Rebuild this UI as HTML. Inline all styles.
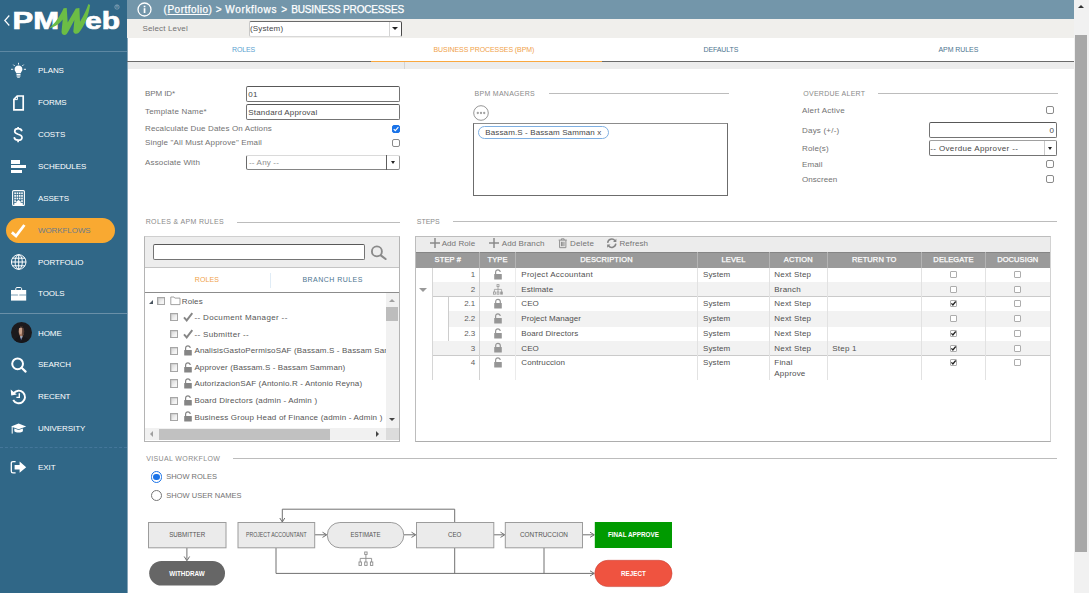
<!DOCTYPE html>
<html lang="en">
<head>
<meta charset="utf-8">
<title>PMWeb - Business Processes</title>
<style>
*{box-sizing:border-box;margin:0;padding:0}
html,body{width:1089px;height:593px;overflow:hidden;background:#fff}
body{position:relative;font-family:"Liberation Sans",sans-serif;font-size:8px;color:#555;line-height:1}
.a{position:absolute}
.t{position:absolute;white-space:nowrap;line-height:10px;height:10px;letter-spacing:.15px}
#side{left:0;top:0;width:127px;height:593px;background:#306787}
.mi{position:absolute;left:38px;color:#fff;font-size:8px;line-height:10px;letter-spacing:-.08px;white-space:nowrap}
.ic{position:absolute;overflow:visible}
.sec{position:absolute;font-size:7px;line-height:9px;color:#8a8a8a;letter-spacing:.3px;white-space:nowrap}
.hl{position:absolute;height:1px;background:#bcbcbc}
.inp{position:absolute;border:1px solid #747474;border-top-color:#585858;background:#fff;border-radius:2px}
.cb{position:absolute;width:8px;height:8px;border:1px solid #8a8a8a;border-radius:2px;background:#fff}
.tcb{position:absolute;width:8.2px;height:8.2px;border:1px solid #a6a6a6;background:linear-gradient(135deg,#d4d4d4,#f4f4f4 70%);box-shadow:inset .6px .6px 0 #c4c4c4}
.tv{color:#565656}
.tb{color:#747474}
.gh{color:#fff;font-size:7.5px;text-align:center;letter-spacing:.1px;font-weight:normal;-webkit-text-stroke:.25px #fff}
.gv{color:#505050}
.gcb{position:absolute;width:7px;height:7px;border:1px solid #adadad;background:#fff;border-radius:1px}
.hd{top:3.2px;font-size:10px;line-height:13px;height:13px;color:#fff;letter-spacing:0;-webkit-text-stroke:.25px #fff}
.lbl{color:#727272}
.val{color:#484848}
</style>
</head>
<body>

<!-- ================= SIDEBAR ================= -->
<div id="side" class="a">
  <!-- logo -->
  <svg class="ic" style="left:0;top:0" width="128" height="52" viewBox="0 0 128 52">
    <path d="M9.3 15.5 L4.8 20.5 L9.3 25.5" fill="none" stroke="#fff" stroke-width="1.2"/>
    <text x="12.5" y="29" font-family="Liberation Sans, sans-serif" font-weight="bold" font-size="24" fill="#fff" stroke="#fff" stroke-width=".7" textLength="46.5" lengthAdjust="spacingAndGlyphs">PM</text>
    <text x="85" y="29" font-family="Liberation Sans, sans-serif" font-weight="bold" font-size="24" fill="#fff" stroke="#fff" stroke-width=".7" textLength="35" lengthAdjust="spacingAndGlyphs">eb</text>
    <path d="M50 27.4 C55 23.3 60 16 63.6 8.2 L66.7 8 L67.7 22.6 L75.8 8.4 L79.4 8 L80 21.8 C83.6 16 86.6 9 88.4 3.9 L90.1 5 C88.8 15 84.2 27 78.8 32.7 C77 34.5 74 34.3 73.3 31.5 L74.4 20 C71.5 25.4 69 30.7 66.7 33.9 C65 35.8 61.8 35.2 61.5 32 L62.7 19.6 C59.5 23.6 55 27.3 50 27.9 Z" fill="#6cbd45"/>
    <circle cx="117" cy="7" r="2.2" fill="none" stroke="#9fb6c6" stroke-width=".6"/>
    <text x="115.7" y="8.3" font-size="3.6" fill="#9fb6c6" font-family="Liberation Sans, sans-serif">R</text>
  </svg>
  <div class="a" style="left:0;top:51px;width:127px;height:1px;background:#5d88a3"></div>
  <div class="a" style="left:0;top:313px;width:127px;height:1px;background:#6a90a8"></div>
  <div class="a" style="left:0;top:447px;width:127px;height:0;border-top:1px dashed #44769a"></div>

  <div class="a" style="left:6px;top:218px;width:109px;height:25px;border-radius:13px;background:#f9a931"></div>

  <div class="mi" style="top:66.1px">PLANS</div>
  <div class="mi" style="top:98.3px">FORMS</div>
  <div class="mi" style="top:130.2px">COSTS</div>
  <div class="mi" style="top:162.1px">SCHEDULES</div>
  <div class="mi" style="top:193.6px">ASSETS</div>
  <div class="mi" style="top:226px;color:#6b7b8c">WORKFLOWS</div>
  <div class="mi" style="top:257.6px">PORTFOLIO</div>
  <div class="mi" style="top:289.3px">TOOLS</div>
  <div class="mi" style="top:328.5px">HOME</div>
  <div class="mi" style="top:360.2px">SEARCH</div>
  <div class="mi" style="top:392.1px">RECENT</div>
  <div class="mi" style="top:424.2px">UNIVERSITY</div>
  <div class="mi" style="top:463.2px">EXIT</div>

  <!-- plans bulb -->
  <svg class="ic" style="left:10px;top:62px" width="17" height="17" viewBox="0 0 17 17">
    <path d="M8.5 3.6 C5.9 3.6 4.6 5.4 4.6 7.2 C4.6 8.9 5.8 9.8 6.3 11.2 L10.7 11.2 C11.2 9.8 12.4 8.9 12.4 7.2 C12.4 5.4 11.1 3.6 8.5 3.6 Z" fill="#fff"/>
    <rect x="6.5" y="11.9" width="4" height="1.1" fill="#fff"/><rect x="6.5" y="13.4" width="4" height="1.1" fill="#fff"/><rect x="7.2" y="14.8" width="2.6" height=".9" fill="#fff"/>
    <path d="M8.5 .8 V2.6 M1 7.3 H3.2 M13.8 7.3 H16 M3.3 2.6 L4.8 4.1 M13.7 2.6 L12.2 4.1" stroke="#fff" stroke-width=".9" fill="none"/>
  </svg>
  <!-- forms doc -->
  <svg class="ic" style="left:12px;top:94px" width="14" height="18" viewBox="0 0 14 18">
    <path d="M5.2 2 H11.2 V15.8 H1.9 V5.4 Z" fill="none" stroke="#fff" stroke-width="1.7" stroke-linejoin="miter"/>
    <path d="M5.4 2.2 V5.6 H2" fill="none" stroke="#fff" stroke-width="1"/>
  </svg>
  <!-- costs -->
  <svg class="ic" style="left:12px;top:126px" width="12" height="17" viewBox="0 0 12 17">
    <path d="M9.9 5.3 C9.5 3.5 8.1 2.7 6.1 2.7 C4.1 2.7 2.7 3.8 2.7 5.3 C2.7 7 4.1 7.6 6.1 8.2 C8.3 8.8 10 9.5 10 11.4 C10 13.2 8.4 14.2 6.2 14.2 C4 14.2 2.5 13.2 2.1 11.3 M6.1 .9 V2.7 M6.1 14.2 V16.2" fill="none" stroke="#fff" stroke-width="1.7"/>
  </svg>
  <!-- schedules -->
  <div class="a" style="left:11px;top:160px;width:9px;height:3.5px;background:#fff"></div>
  <div class="a" style="left:11px;top:164.7px;width:15px;height:3.8px;background:#fff"></div>
  <div class="a" style="left:11px;top:169.5px;width:11px;height:3.5px;background:#fff"></div>
  <!-- assets building -->
  <svg class="ic" style="left:12px;top:190px" width="13" height="16" viewBox="0 0 13 16">
    <rect x=".6" y=".6" width="11.8" height="14.8" rx="1" fill="none" stroke="#fff" stroke-width="1.1"/>
    <g fill="#fff">
      <rect x="2.3" y="2.4" width="1.6" height="1.8"/><rect x="4.6" y="2.4" width="1.6" height="1.8"/><rect x="6.9" y="2.4" width="1.6" height="1.8"/><rect x="9.2" y="2.4" width="1.6" height="1.8"/>
      <rect x="2.3" y="5" width="1.6" height="1.8"/><rect x="4.6" y="5" width="1.6" height="1.8"/><rect x="6.9" y="5" width="1.6" height="1.8"/><rect x="9.2" y="5" width="1.6" height="1.8"/>
      <rect x="2.3" y="7.6" width="1.6" height="1.8"/><rect x="4.6" y="7.6" width="1.6" height="1.8"/><rect x="6.9" y="7.6" width="1.6" height="1.8"/><rect x="9.2" y="7.6" width="1.6" height="1.8"/>
      <rect x="2.3" y="10.2" width="1.6" height="1.8"/><rect x="9.2" y="10.2" width="1.6" height="1.8"/>
      <path d="M2.3 12.8 H4.4 V11.2 L6.5 9.9 L8.6 11.2 V12.8 H10.8 V15 H2.3 Z"/>
    </g>
  </svg>
  <!-- workflows check -->
  <svg class="ic" style="left:10px;top:222px" width="17" height="17" viewBox="0 0 17 17">
    <path d="M1.9 10.4 L6 14 L14.4 3" fill="none" stroke="#fff" stroke-width="2.8" stroke-linejoin="miter"/>
  </svg>
  <!-- portfolio globe -->
  <svg class="ic" style="left:10px;top:253px" width="18" height="18" viewBox="0 0 18 18">
    <g fill="none" stroke="#fff" stroke-width="1">
      <circle cx="8.7" cy="9" r="7.3"/>
      <ellipse cx="8.7" cy="9" rx="3.6" ry="7.3"/>
      <path d="M8.7 1.7 V16.3 M1.4 9 H16 M2.5 5.2 H14.9 M2.5 12.8 H14.9"/>
    </g>
  </svg>
  <!-- tools briefcase -->
  <svg class="ic" style="left:10px;top:286px" width="18" height="16" viewBox="0 0 18 16">
    <path d="M5.8 4 V2.6 C5.8 1.9 6.3 1.5 7 1.5 H10.4 C11.1 1.5 11.6 1.9 11.6 2.6 V4" fill="none" stroke="#fff" stroke-width="1"/>
    <rect x="1" y="4" width="15.2" height="4.6" fill="#fff"/>
    <rect x="1" y="9.4" width="15.2" height="5.2" fill="#fff"/>
    <rect x="1" y="8.4" width="6.6" height="1.2" fill="#c9d8e2"/><rect x="9.6" y="8.4" width="6.6" height="1.2" fill="#c9d8e2"/>
    <rect x="7.8" y="7.9" width="1.6" height="2" fill="#fff"/>
  </svg>
  <!-- home avatar -->
  <svg class="ic" style="left:11px;top:321.9px" width="21" height="21" viewBox="0 0 21 21">
    <defs><clipPath id="av"><circle cx="10.5" cy="10.5" r="10.5"/></clipPath></defs>
    <circle cx="10.5" cy="10.5" r="10.5" fill="#1c1a1d"/>
    <g clip-path="url(#av)">
      <ellipse cx="10.4" cy="9.3" rx="2.7" ry="5" fill="#a77a64"/>
      <ellipse cx="9.6" cy="8.6" rx="1.5" ry="3.6" fill="#c9a28c"/>
      <path d="M11.2 4.6 C12.8 5 13.4 7 13.2 11 C12.6 12.6 12 13.6 11.2 14 Z" fill="#3a2a26" opacity=".75"/>
      <path d="M7.6 6.6 C7.8 3.6 12.6 3.4 13.2 6.4 C12 5.2 9 5.2 7.6 6.6 Z" fill="#151214"/>
      <path d="M2.5 21 C3 16.5 6.5 14.4 10.4 14.4 C14.4 14.4 18 16.5 18.5 21 Z" fill="#17161a"/>
      <path d="M8.9 14.3 L10.2 17.8 L11.8 14.3 Z" fill="#cfd3de"/>
      <path d="M9.7 15.6 L9.9 19.4 L10.7 15.6 Z" fill="#2a3c7a"/>
    </g>
  </svg>
  <!-- search -->
  <svg class="ic" style="left:10px;top:356px" width="18" height="18" viewBox="0 0 18 18">
    <circle cx="7.6" cy="7.8" r="5.4" fill="none" stroke="#fff" stroke-width="2"/>
    <path d="M11.6 11.8 L15.6 15.6" stroke="#fff" stroke-width="2.2" stroke-linecap="round"/>
  </svg>
  <!-- recent -->
  <svg class="ic" style="left:10px;top:388px" width="18" height="18" viewBox="0 0 18 18">
    <path d="M3.6 5.3 A6.3 6.3 0 1 1 3.2 12" fill="none" stroke="#fff" stroke-width="1.9"/>
    <path d="M.7 1.6 L1.2 7.4 L6.8 6.4 Z" fill="#fff"/>
    <path d="M9.3 5.2 V9.4 H6.4" fill="none" stroke="#fff" stroke-width="1.4"/>
  </svg>
  <!-- university -->
  <svg class="ic" style="left:10px;top:422px" width="18" height="14" viewBox="0 0 18 14">
    <path d="M1 4.4 L8.6 1.6 L16.2 4.4 L8.6 7.2 Z" fill="#fff"/>
    <path d="M4.3 6.4 V9.3 C5.6 10.9 11.6 10.9 12.9 9.3 V6.4 L8.6 8 Z" fill="#fff"/>
    <path d="M2.2 5 V11.6" stroke="#fff" stroke-width="1"/>
  </svg>
  <!-- exit -->
  <svg class="ic" style="left:10px;top:460px" width="18" height="15" viewBox="0 0 18 15">
    <path d="M5.6 1.6 H3 C1.9 1.6 1.3 2.2 1.3 3.3 V11.2 C1.3 12.3 1.9 12.9 3 12.9 H5.6" fill="none" stroke="#fff" stroke-width="1.3"/>
    <path d="M4.6 5 H9.6 V1.6 L16.2 7.2 L9.6 12.8 V9.4 H4.6 Z" fill="#fff"/>
  </svg>

</div>

<!-- ================= HEADER ================= -->
<div class="a" style="left:127px;top:0;width:1px;height:593px;background:#86a5b9"></div>
<div class="a" style="left:127px;top:0;width:947px;height:18.5px;background:#7396aa"></div>
<div class="a" style="left:127px;top:18.5px;width:947px;height:19.8px;background:#f0efec"></div>
<svg class="ic" style="left:137px;top:2px" width="15" height="15" viewBox="0 0 15 15">
  <circle cx="7.5" cy="7.5" r="6.5" fill="none" stroke="#fff" stroke-width="1.3"/>
  <rect x="6.7" y="6.2" width="1.7" height="4.8" fill="#fff"/><rect x="6.7" y="3.7" width="1.7" height="1.6" fill="#fff"/>
</svg>
<div class="t hd" style="left:163.6px;letter-spacing:.49px">(<span style="text-decoration:underline">Portfolio</span>)</div>
<div class="t hd" style="left:215.7px">&gt;</div>
<div class="t hd" style="left:225.3px;letter-spacing:.65px">Workflows</div>
<div class="t hd" style="left:281.3px">&gt;</div>
<div class="t hd" style="left:291.2px;letter-spacing:-.16px">BUSINESS PROCESSES</div>
<div class="t lbl" style="left:142.5px;top:23.8px">Select Level</div>
<div class="inp" style="left:249px;top:21px;width:153px;height:15.5px;border-color:#6a6a6a #4a4a4a #d8d8d8 #c8c8c8"></div>
<div class="a" style="left:389px;top:22px;width:1px;height:13.5px;background:#d4d4d4"></div>
<div class="a" style="left:392.2px;top:27.2px;width:0;height:0;border-left:3px solid transparent;border-right:3px solid transparent;border-top:3px solid #222"></div>
<div class="t val" style="left:250px;top:23.8px">(System)</div>

<!-- tabs -->
<div class="a" style="left:127px;top:60.8px;width:947px;height:1.4px;background:#6a6a6a"></div>
<div class="a" style="left:128px;top:62px;width:946px;height:7px;background:#ececec"></div>
<div class="a" style="left:404px;top:62px;width:1px;height:7px;background:#d4d4d4"></div>
<div class="a" style="left:371px;top:60.5px;width:231px;height:1.7px;background:#f9a73e"></div>
<div class="t" style="left:232px;top:45px;font-size:7px;letter-spacing:-.15px;color:#5a9fd0">ROLES</div>
<div class="t" style="left:433.5px;top:45px;font-size:7px;letter-spacing:-.08px;color:#f0a24a">BUSINESS PROCESSES (BPM)</div>
<div class="t" style="left:703.5px;top:45px;font-size:7px;letter-spacing:-.12px;color:#4d7590">DEFAULTS</div>
<div class="t" style="left:938.5px;top:45px;font-size:7px;letter-spacing:-.08px;color:#4d7590">APM RULES</div>

<!-- page scrollbar -->
<div class="a" style="left:1074px;top:0;width:15px;height:593px;background:#f1f1f1"></div>
<div class="a" style="left:1075px;top:35px;width:12px;height:517px;background:#a8a8a8"></div>
<div class="a" style="left:1078px;top:5px;width:0;height:0;border-left:3px solid transparent;border-right:3px solid transparent;border-bottom:3px solid #333"></div>


<!-- ================= FORM (left column) ================= -->
<div class="t lbl" style="left:145px;top:89.1px;letter-spacing:-.1px">BPM ID*</div>
<div class="t lbl" style="left:145px;top:107.1px;letter-spacing:.2px">Template Name*</div>
<div class="t lbl" style="left:145px;top:124.1px;letter-spacing:.13px">Recalculate Due Dates On Actions</div>
<div class="t lbl" style="left:145px;top:138.3px;letter-spacing:.15px">Single "All Must Approve" Email</div>
<div class="t lbl" style="left:145px;top:157.9px;letter-spacing:.15px">Associate With</div>
<div class="inp" style="left:246px;top:86px;width:154px;height:16px"></div>
<div class="t val" style="left:248.3px;top:89.5px">01</div>
<div class="inp" style="left:246px;top:104px;width:154px;height:15.5px"></div>
<div class="t val" style="left:248.3px;top:107.5px;letter-spacing:.19px">Standard Approval</div>
<div class="cb" style="left:391.5px;top:125px;background:#1a73e8;border-color:#1a73e8"></div>
<svg class="ic" style="left:391.5px;top:125px" width="8" height="8" viewBox="0 0 8 8"><path d="M1.7 4.1 L3.3 5.7 L6.4 2.2" fill="none" stroke="#fff" stroke-width="1.1"/></svg>
<div class="cb" style="left:391.5px;top:139.3px"></div>
<div class="inp" style="left:246px;top:154.7px;width:154px;height:15.3px;border-color:#dadada #9a9a9a #858585 #6a6a6a"></div>
<div class="a" style="left:386.2px;top:155px;width:1px;height:14.5px;background:#5e5e5e"></div>
<div class="a" style="left:390.5px;top:161px;width:0;height:0;border-left:2.8px solid transparent;border-right:2.8px solid transparent;border-top:3px solid #222"></div>
<div class="t" style="left:249px;top:157.9px;color:#8e8e8e;letter-spacing:.17px">-- Any --</div>

<!-- ================= BPM MANAGERS ================= -->
<div class="sec" style="left:474.6px;top:89px;letter-spacing:.27px">BPM MANAGERS</div>
<div class="hl" style="left:548.5px;top:93px;width:180px"></div>
<svg class="ic" style="left:473px;top:104.5px" width="16" height="16" viewBox="0 0 16 16">
  <circle cx="8" cy="8" r="7.3" fill="#fff" stroke="#8a8a8a" stroke-width=".9"/>
  <circle cx="4.8" cy="8" r="1.15" fill="#a2a2a2"/><circle cx="8" cy="8" r="1.15" fill="#a2a2a2"/><circle cx="11.2" cy="8" r="1.15" fill="#a2a2a2"/>
</svg>
<div class="a" style="left:473px;top:123px;width:255px;height:73px;border:1px solid #6c6c6c;border-top-color:#8c8c8c;background:#fff"></div>
<div class="a" style="left:477.5px;top:126.2px;width:131.5px;height:12.6px;border:1px solid #7fb0e2;border-radius:6.5px;background:#fff"></div>
<div class="t val" style="left:485.3px;top:127.6px;letter-spacing:.12px">Bassam.S - Bassam Samman x</div>

<!-- ================= OVERDUE ALERT ================= -->
<div class="sec" style="left:803.3px;top:89px;letter-spacing:.26px">OVERDUE ALERT</div>
<div class="hl" style="left:877.5px;top:93px;width:180px"></div>
<div class="t lbl" style="left:802px;top:105.6px;letter-spacing:.25px">Alert Active</div>
<div class="t lbl" style="left:802px;top:126px;letter-spacing:.21px">Days (+/-)</div>
<div class="t lbl" style="left:802px;top:144px;letter-spacing:.15px">Role(s)</div>
<div class="t lbl" style="left:802px;top:159.6px;letter-spacing:.1px">Email</div>
<div class="t lbl" style="left:802px;top:175px;letter-spacing:.06px">Onscreen</div>
<div class="cb" style="left:1046px;top:106.3px"></div>
<div class="cb" style="left:1046px;top:160.3px"></div>
<div class="cb" style="left:1046px;top:175.2px"></div>
<div class="inp" style="left:929px;top:122px;width:128px;height:16px"></div>
<div class="t val" style="left:1049.5px;top:126px">0</div>
<div class="inp" style="left:929px;top:140.2px;width:128px;height:15.6px;border-top-color:#a0a0a0"></div>
<div class="a" style="left:1044px;top:141.2px;width:1px;height:13.6px;background:#cacaca"></div>
<div class="a" style="left:1047.8px;top:147px;width:0;height:0;border-left:2.8px solid transparent;border-right:2.8px solid transparent;border-top:3px solid #222"></div>
<div class="t val" style="left:930.3px;top:144px;letter-spacing:.36px">-- Overdue Approver --</div>


<!-- ================= ROLES & APM RULES ================= -->
<div class="sec" style="left:145.7px;top:217.3px;letter-spacing:.35px">ROLES &amp; APM RULES</div>
<div class="hl" style="left:237px;top:221.5px;width:163px"></div>
<div class="a" style="left:144px;top:236px;width:256px;height:205.5px;border:1px solid #b4b4b4;border-top-color:#cfcfcf;background:#fff"></div>
<div class="a" style="left:145px;top:237px;width:254px;height:30.5px;background:#ededed;border-bottom:1px solid #c4c4c4"></div>
<div class="inp" style="left:153px;top:244px;width:212px;height:15.5px"></div>
<svg class="ic" style="left:370px;top:245px" width="18" height="16" viewBox="0 0 18 16">
  <circle cx="6.9" cy="6.4" r="5" fill="none" stroke="#8a8a8a" stroke-width="1.9"/>
  <path d="M10.8 10.3 L15.6 14" stroke="#8a8a8a" stroke-width="2.1" stroke-linecap="round"/>
</svg>
<div class="a" style="left:145px;top:292px;width:254px;height:1px;background:#8c8c8c"></div>
<div class="a" style="left:270px;top:273px;width:1px;height:15px;background:#e0ecf6"></div>
<div class="t" style="left:194.8px;top:275px;font-size:7px;letter-spacing:.1px;color:#f0a24a">ROLES</div>
<div class="t" style="left:302.5px;top:275px;font-size:7px;letter-spacing:.45px;color:#4d7590">BRANCH RULES</div>
<div class="a" style="left:0;top:0;width:385.5px;height:428px;overflow:hidden">
<div class="a" style="left:149px;top:299.5px;width:0;height:0;border-left:4.2px solid transparent;border-bottom:4.2px solid #4a5560"></div>
<div class="tcb" style="left:157px;top:296.8px"></div>
<svg class="ic" style="left:169.5px;top:296px" width="11" height="10" viewBox="0 0 11 10"><path d="M.8 1 H4 L4.8 2.1 H10 V8.6 H.8 Z" fill="#fff" stroke="#8a8a8a" stroke-width=".8"/></svg>
<div class="t tv" style="left:181.8px;top:297px;letter-spacing:0.1px">Roles</div>
<div class="tcb" style="left:169.9px;top:313.2px"></div>
<svg class="ic" style="left:182.5px;top:311.9px" width="10" height="10" viewBox="0 0 10 10"><path d="M1 5.4 L3.7 8.4 L9.3 1.2" fill="none" stroke="#868686" stroke-width="1.9"/></svg>
<div class="t tv" style="left:194.4px;top:312.8px;letter-spacing:0.36px">-- Document Manager --</div>
<div class="tcb" style="left:169.9px;top:330.2px"></div>
<svg class="ic" style="left:182.5px;top:328.9px" width="10" height="10" viewBox="0 0 10 10"><path d="M1 5.4 L3.7 8.4 L9.3 1.2" fill="none" stroke="#868686" stroke-width="1.9"/></svg>
<div class="t tv" style="left:194.4px;top:329.8px;letter-spacing:0.36px">-- Submitter --</div>
<div class="tcb" style="left:169.9px;top:346.7px"></div>
<svg class="ic" style="left:183.7px;top:344.9px" width="8" height="11" viewBox="0 0 8 11"><path d="M1.6 5.2 V3.2 C1.6 1.7 2.6 .9 3.9 .9 C5.2 .9 6.2 1.7 6.2 3" fill="none" stroke="#858585" stroke-width="1.2"/><rect x=".2" y="5" width="7.6" height="5.4" rx=".5" fill="#858585"/></svg>
<div class="t tv" style="left:194.4px;top:346.3px;letter-spacing:0.15px">AnalisisGastoPermisoSAF (Bassam.S - Bassam Samman)</div>
<div class="tcb" style="left:169.9px;top:363.4px"></div>
<svg class="ic" style="left:183.7px;top:361.6px" width="8" height="11" viewBox="0 0 8 11"><path d="M1.6 5.2 V3.2 C1.6 1.7 2.6 .9 3.9 .9 C5.2 .9 6.2 1.7 6.2 3" fill="none" stroke="#858585" stroke-width="1.2"/><rect x=".2" y="5" width="7.6" height="5.4" rx=".5" fill="#858585"/></svg>
<div class="t tv" style="left:194.4px;top:363.0px;letter-spacing:0.12px">Approver (Bassam.S - Bassam Samman)</div>
<div class="tcb" style="left:169.9px;top:379.4px"></div>
<svg class="ic" style="left:183.7px;top:377.6px" width="8" height="11" viewBox="0 0 8 11"><path d="M1.6 5.2 V3.2 C1.6 1.7 2.6 .9 3.9 .9 C5.2 .9 6.2 1.7 6.2 3" fill="none" stroke="#858585" stroke-width="1.2"/><rect x=".2" y="5" width="7.6" height="5.4" rx=".5" fill="#858585"/></svg>
<div class="t tv" style="left:194.4px;top:379.0px;letter-spacing:0.15px">AutorizacionSAF (Antonio.R - Antonio Reyna)</div>
<div class="tcb" style="left:169.9px;top:396.6px"></div>
<svg class="ic" style="left:183.7px;top:394.8px" width="8" height="11" viewBox="0 0 8 11"><path d="M1.6 5.2 V3.2 C1.6 1.7 2.6 .9 3.9 .9 C5.2 .9 6.2 1.7 6.2 3" fill="none" stroke="#858585" stroke-width="1.2"/><rect x=".2" y="5" width="7.6" height="5.4" rx=".5" fill="#858585"/></svg>
<div class="t tv" style="left:194.4px;top:396.2px;letter-spacing:0.2px">Board Directors (admin - Admin )</div>
<div class="tcb" style="left:169.9px;top:413.1px"></div>
<svg class="ic" style="left:183.7px;top:411.3px" width="8" height="11" viewBox="0 0 8 11"><path d="M1.6 5.2 V3.2 C1.6 1.7 2.6 .9 3.9 .9 C5.2 .9 6.2 1.7 6.2 3" fill="none" stroke="#858585" stroke-width="1.2"/><rect x=".2" y="5" width="7.6" height="5.4" rx=".5" fill="#858585"/></svg>
<div class="t tv" style="left:194.4px;top:412.7px;letter-spacing:0.2px">Business Group Head of Finance (admin - Admin )</div>
</div>
<!-- tree v-scroll -->
<div class="a" style="left:385.7px;top:293px;width:13px;height:134.5px;background:#f1f1f1"></div>
<div class="a" style="left:386.3px;top:307px;width:11.7px;height:14px;background:#bdbdbd"></div>
<div class="a" style="left:389px;top:298.5px;width:0;height:0;border-left:3px solid transparent;border-right:3px solid transparent;border-bottom:3px solid #a0a0a0"></div>
<div class="a" style="left:389px;top:417.5px;width:0;height:0;border-left:3px solid transparent;border-right:3px solid transparent;border-top:3px solid #444"></div>
<!-- tree h-scroll -->
<div class="a" style="left:145px;top:427.7px;width:254px;height:12.8px;background:#f1f1f1"></div>
<div class="a" style="left:158.8px;top:428.5px;width:171px;height:11.2px;background:#c1c1c1"></div>
<div class="a" style="left:385.7px;top:427.7px;width:13.3px;height:12.8px;background:#dcdcdc"></div>
<div class="a" style="left:149.5px;top:431px;width:0;height:0;border-top:3px solid transparent;border-bottom:3px solid transparent;border-right:3px solid #a0a0a0"></div>
<div class="a" style="left:375.5px;top:431px;width:0;height:0;border-top:3px solid transparent;border-bottom:3px solid transparent;border-left:3px solid #444"></div>


<!-- ================= STEPS GRID ================= -->
<div class="sec" style="left:416.7px;top:217.3px;letter-spacing:.02px">STEPS</div>
<div class="hl" style="left:452.5px;top:221.3px;width:604.5px"></div>
<div class="a" style="left:415px;top:236px;width:636px;height:205.5px;border:1px solid #bdbdbd;border-right-color:#d2d2d2;border-bottom-color:#adadad;background:#fff"></div>
<div class="a" style="left:416px;top:237px;width:634px;height:15px;background:#ececec"></div>
<div class="a" style="left:416px;top:252px;width:634px;height:15.5px;background:#9a9a9a;border-top:1px solid #858585"></div>
<svg class="ic" style="left:429.7px;top:238px" width="10" height="10" viewBox="0 0 10 10"><path d="M5 0 V10 M0 5 H10" stroke="#8a8a8a" stroke-width="1.5"/></svg>
<div class="t tb" style="left:441.7px;top:238.8px;letter-spacing:.07px">Add Role</div>
<svg class="ic" style="left:489px;top:238px" width="10" height="10" viewBox="0 0 10 10"><path d="M5 0 V10 M0 5 H10" stroke="#8a8a8a" stroke-width="1.5"/></svg>
<div class="t tb" style="left:501.7px;top:238.8px;letter-spacing:.11px">Add Branch</div>
<svg class="ic" style="left:557.8px;top:238px" width="9.5" height="10.5" viewBox="0 0 9 10"><path d="M.6 2 H8.4 M3.2 2 V.8 H5.8 V2 M1.5 2.2 V9.2 H7.5 V2.2 M3.3 3.6 V7.8 M4.5 3.6 V7.8 M5.7 3.6 V7.8" fill="none" stroke="#8a8a8a" stroke-width=".9"/></svg>
<div class="t tb" style="left:570px;top:238.8px;letter-spacing:.15px">Delete</div>
<svg class="ic" style="left:606.4px;top:237.6px" width="11.5" height="10.5" viewBox="0 0 11 10"><path d="M1.6 4.6 A3.9 3.9 0 0 1 8.6 2.6 M9.4 5.4 A3.9 3.9 0 0 1 2.4 7.4" fill="none" stroke="#858585" stroke-width="1.4"/><path d="M9.9 .6 V3.8 H6.7 Z M1.1 9.4 V6.2 H4.3 Z" fill="#858585"/></svg>
<div class="t tb" style="left:619.5px;top:238.8px;letter-spacing:.07px">Refresh</div>
<div class="t gh" style="left:416px;top:254.8px;width:63.5px">STEP #</div>
<div class="t gh" style="left:479.5px;top:254.8px;width:36.0px">TYPE</div>
<div class="a" style="left:479.0px;top:252px;width:1px;height:15.5px;background:#b4b4b4"></div>
<div class="t gh" style="left:515.5px;top:254.8px;width:182.0px">DESCRIPTION</div>
<div class="a" style="left:515.0px;top:252px;width:1px;height:15.5px;background:#b4b4b4"></div>
<div class="t gh" style="left:697.5px;top:254.8px;width:72.0px">LEVEL</div>
<div class="a" style="left:697.0px;top:252px;width:1px;height:15.5px;background:#b4b4b4"></div>
<div class="t gh" style="left:769.5px;top:254.8px;width:57.5px">ACTION</div>
<div class="a" style="left:769.0px;top:252px;width:1px;height:15.5px;background:#b4b4b4"></div>
<div class="t gh" style="left:827px;top:254.8px;width:94.5px">RETURN TO</div>
<div class="a" style="left:826.5px;top:252px;width:1px;height:15.5px;background:#b4b4b4"></div>
<div class="t gh" style="left:921.5px;top:254.8px;width:64.0px">DELEGATE</div>
<div class="a" style="left:921.0px;top:252px;width:1px;height:15.5px;background:#b4b4b4"></div>
<div class="t gh" style="left:985.5px;top:254.8px;width:64.5px">DOCUSIGN</div>
<div class="a" style="left:985.0px;top:252px;width:1px;height:15.5px;background:#b4b4b4"></div>
<div class="a" style="left:432.5px;top:267.5px;width:617.5px;height:14.5px;background:#fff"></div>
<div class="t" style="left:432.5px;top:270.1px;width:42.8px;text-align:right;color:#5e5e5e;letter-spacing:0">1</div>
<svg class="ic" style="left:494px;top:269.0px" width="8" height="11" viewBox="0 0 8 11"><path d="M1.6 5.2 V3.2 C1.6 1.7 2.6 .9 3.9 .9 C5.2 .9 6.2 1.7 6.2 3" fill="none" stroke="#969696" stroke-width="1.2"/><rect x=".2" y="5" width="7.6" height="5.4" rx=".5" fill="#969696"/></svg>
<div class="t gv" style="left:521.3px;top:270.1px;letter-spacing:0.28px">Project Accountant</div>
<div class="t gv" style="left:703px;top:270.1px;letter-spacing:.1px">System</div>
<div class="t gv" style="left:774.3px;top:270.1px;letter-spacing:.2px">Next Step</div>
<div class="gcb" style="left:950px;top:271.1px"></div>
<div class="gcb" style="left:1014.2px;top:271.1px"></div>
<div class="a" style="left:432.5px;top:282px;width:617.5px;height:14.7px;background:#f2f2f2"></div>
<div class="t" style="left:432.5px;top:284.6px;width:42.8px;text-align:right;color:#5e5e5e;letter-spacing:0">2</div>
<svg class="ic" style="left:493px;top:283.7px" width="10" height="11" viewBox="0 0 10 11"><g fill="none" stroke="#9a9a9a" stroke-width=".8"><rect x="4" y=".6" width="2" height="2"/><path d="M5 2.6 V8 M1.4 8 V5.4 H8.6 V8"/><rect x=".5" y="8" width="1.9" height="2.2"/><rect x="4.05" y="8" width="1.9" height="2.2"/><rect x="7.6" y="8" width="1.9" height="2.2"/></g></svg>
<div class="t gv" style="left:521.3px;top:284.6px;letter-spacing:0.1px">Estimate</div>
<div class="t gv" style="left:774.3px;top:284.6px;letter-spacing:.2px">Branch</div>
<div class="gcb" style="left:950px;top:285.6px"></div>
<div class="gcb" style="left:1014.2px;top:285.6px"></div>
<div class="a" style="left:432.5px;top:296.2px;width:617.5px;height:1px;background:#cacaca"></div>
<div class="a" style="left:449px;top:296.7px;width:601px;height:14.7px;background:#fff"></div>
<div class="t" style="left:449px;top:299.3px;width:26.3px;text-align:right;color:#5e5e5e;letter-spacing:0">2.1</div>
<svg class="ic" style="left:494px;top:298.2px" width="8" height="11" viewBox="0 0 8 11"><path d="M1.7 5.2 V3.6 C1.7 2.1 2.7 1.3 4 1.3 C5.3 1.3 6.3 2.1 6.3 3.6 V5.2" fill="none" stroke="#969696" stroke-width="1.2"/><rect x=".2" y="5" width="7.6" height="5.4" rx=".5" fill="#969696"/></svg>
<div class="t gv" style="left:521.3px;top:299.3px;letter-spacing:0.1px">CEO</div>
<div class="t gv" style="left:703px;top:299.3px;letter-spacing:.1px">System</div>
<div class="t gv" style="left:774.3px;top:299.3px;letter-spacing:.2px">Next Step</div>
<div class="gcb" style="left:950px;top:300.3px"></div>
<svg class="ic" style="left:950px;top:300.3px" width="7" height="7" viewBox="0 0 7 7"><path d="M1.4 3.4 L2.9 5 L5.7 1.5" fill="none" stroke="#222" stroke-width="1.3"/></svg>
<div class="gcb" style="left:1014.2px;top:300.3px"></div>
<div class="a" style="left:449px;top:310.9px;width:601px;height:1px;background:#cacaca"></div>
<div class="a" style="left:449px;top:311.4px;width:601px;height:15.4px;background:#f2f2f2"></div>
<div class="t" style="left:449px;top:314.0px;width:26.3px;text-align:right;color:#5e5e5e;letter-spacing:0">2.2</div>
<svg class="ic" style="left:494px;top:312.9px" width="8" height="11" viewBox="0 0 8 11"><path d="M1.6 5.2 V3.2 C1.6 1.7 2.6 .9 3.9 .9 C5.2 .9 6.2 1.7 6.2 3" fill="none" stroke="#969696" stroke-width="1.2"/><rect x=".2" y="5" width="7.6" height="5.4" rx=".5" fill="#969696"/></svg>
<div class="t gv" style="left:521.3px;top:314.0px;letter-spacing:0.07px">Project Manager</div>
<div class="t gv" style="left:703px;top:314.0px;letter-spacing:.1px">System</div>
<div class="t gv" style="left:774.3px;top:314.0px;letter-spacing:.2px">Next Step</div>
<div class="gcb" style="left:950px;top:315.0px"></div>
<div class="gcb" style="left:1014.2px;top:315.0px"></div>
<div class="a" style="left:449px;top:326.8px;width:601px;height:14.1px;background:#fff"></div>
<div class="t" style="left:449px;top:328.9px;width:26.3px;text-align:right;color:#5e5e5e;letter-spacing:0">2.3</div>
<svg class="ic" style="left:494px;top:327.8px" width="8" height="11" viewBox="0 0 8 11"><path d="M1.6 5.2 V3.2 C1.6 1.7 2.6 .9 3.9 .9 C5.2 .9 6.2 1.7 6.2 3" fill="none" stroke="#969696" stroke-width="1.2"/><rect x=".2" y="5" width="7.6" height="5.4" rx=".5" fill="#969696"/></svg>
<div class="t gv" style="left:521.3px;top:328.9px;letter-spacing:0.1px">Board Directors</div>
<div class="t gv" style="left:703px;top:328.9px;letter-spacing:.1px">System</div>
<div class="t gv" style="left:774.3px;top:328.9px;letter-spacing:.2px">Next Step</div>
<div class="gcb" style="left:950px;top:329.9px"></div>
<svg class="ic" style="left:950px;top:329.9px" width="7" height="7" viewBox="0 0 7 7"><path d="M1.4 3.4 L2.9 5 L5.7 1.5" fill="none" stroke="#222" stroke-width="1.3"/></svg>
<div class="gcb" style="left:1014.2px;top:329.9px"></div>
<div class="a" style="left:432.5px;top:340.9px;width:617.5px;height:14.6px;background:#f2f2f2"></div>
<div class="t" style="left:432.5px;top:343.5px;width:42.8px;text-align:right;color:#5e5e5e;letter-spacing:0">3</div>
<svg class="ic" style="left:494px;top:342.4px" width="8" height="11" viewBox="0 0 8 11"><path d="M1.7 5.2 V3.6 C1.7 2.1 2.7 1.3 4 1.3 C5.3 1.3 6.3 2.1 6.3 3.6 V5.2" fill="none" stroke="#969696" stroke-width="1.2"/><rect x=".2" y="5" width="7.6" height="5.4" rx=".5" fill="#969696"/></svg>
<div class="t gv" style="left:521.3px;top:343.5px;letter-spacing:0.1px">CEO</div>
<div class="t gv" style="left:703px;top:343.5px;letter-spacing:.1px">System</div>
<div class="t gv" style="left:774.3px;top:343.5px;letter-spacing:.2px">Next Step</div>
<div class="t gv" style="left:832.3px;top:343.5px;letter-spacing:.2px">Step 1</div>
<div class="gcb" style="left:950px;top:344.5px"></div>
<svg class="ic" style="left:950px;top:344.5px" width="7" height="7" viewBox="0 0 7 7"><path d="M1.4 3.4 L2.9 5 L5.7 1.5" fill="none" stroke="#222" stroke-width="1.3"/></svg>
<div class="gcb" style="left:1014.2px;top:344.5px"></div>
<div class="a" style="left:432.5px;top:355.0px;width:617.5px;height:1px;background:#cacaca"></div>
<div class="a" style="left:432.5px;top:355.5px;width:617.5px;height:24.5px;background:#fff"></div>
<div class="t" style="left:432.5px;top:358.1px;width:42.8px;text-align:right;color:#5e5e5e;letter-spacing:0">4</div>
<svg class="ic" style="left:494px;top:357.0px" width="8" height="11" viewBox="0 0 8 11"><path d="M1.6 5.2 V3.2 C1.6 1.7 2.6 .9 3.9 .9 C5.2 .9 6.2 1.7 6.2 3" fill="none" stroke="#969696" stroke-width="1.2"/><rect x=".2" y="5" width="7.6" height="5.4" rx=".5" fill="#969696"/></svg>
<div class="t gv" style="left:521.3px;top:358.1px;letter-spacing:0.1px">Contruccion</div>
<div class="t gv" style="left:703px;top:358.1px;letter-spacing:.1px">System</div>
<div class="t gv" style="left:774.3px;top:358.1px;letter-spacing:.2px">Final</div>
<div class="t gv" style="left:774.3px;top:368.6px;letter-spacing:.2px">Approve</div>
<div class="gcb" style="left:950px;top:359.1px"></div>
<svg class="ic" style="left:950px;top:359.1px" width="7" height="7" viewBox="0 0 7 7"><path d="M1.4 3.4 L2.9 5 L5.7 1.5" fill="none" stroke="#222" stroke-width="1.3"/></svg>
<div class="gcb" style="left:1014.2px;top:359.1px"></div>
<div class="a" style="left:432px;top:267.5px;width:1px;height:112.5px;background:#d6d6d6"></div>
<div class="a" style="left:448px;top:296.7px;width:1px;height:44.2px;background:#cdcdcd"></div>
<div class="a" style="left:479.0px;top:267.5px;width:1px;height:112.5px;background:#d2d2d2"></div>
<div class="a" style="left:515.0px;top:267.5px;width:1px;height:112.5px;background:#ebebeb"></div>
<div class="a" style="left:697.0px;top:267.5px;width:1px;height:112.5px;background:#e2e2e2"></div>
<div class="a" style="left:769.0px;top:267.5px;width:1px;height:112.5px;background:#e2e2e2"></div>
<div class="a" style="left:826.5px;top:267.5px;width:1px;height:112.5px;background:#e2e2e2"></div>
<div class="a" style="left:921.0px;top:267.5px;width:1px;height:112.5px;background:#e2e2e2"></div>
<div class="a" style="left:985.0px;top:267.5px;width:1px;height:112.5px;background:#e2e2e2"></div>
<div class="a" style="left:419.3px;top:287.5px;width:0;height:0;border-left:4.7px solid transparent;border-right:4.7px solid transparent;border-top:4.8px solid #999"></div>


<!-- ================= VISUAL WORKFLOW ================= -->
<div class="sec" style="left:146.2px;top:454.2px;letter-spacing:.37px">VISUAL WORKFLOW</div>
<div class="hl" style="left:233px;top:458px;width:824px"></div>
<div class="a" style="left:151px;top:471.3px;width:11.4px;height:11.4px;border-radius:50%;border:1px solid #1a73e8;background:#fff"></div>
<div class="a" style="left:153.4px;top:473.7px;width:6.6px;height:6.6px;border-radius:50%;background:#1a73e8"></div>
<div class="a" style="left:151px;top:490px;width:11.4px;height:11.4px;border-radius:50%;border:1px solid #767676;background:#fff"></div>
<div class="t lbl" style="left:166.2px;top:472.4px;font-size:7.5px;letter-spacing:0">SHOW ROLES</div>
<div class="t lbl" style="left:166.2px;top:491.1px;font-size:7.5px;letter-spacing:.02px">SHOW USER NAMES</div>
<svg class="ic" style="left:140px;top:500px" width="560" height="93" viewBox="140 500 560 93" font-family="Liberation Sans, sans-serif">
  <g fill="none" stroke="#707070" stroke-width="1">
    <!-- loop CEO -> Project Accountant -->
    <path d="M454.7 522.5 V509.2 H282.3 V521.5"/>
    <path d="M279.8 518 L282.3 522 L284.8 518"/>
    <!-- submitter -> withdraw -->
    <path d="M186.9 548 V560"/>
    <path d="M184.2 556.5 L186.9 560.8 L189.6 556.5"/>
    <!-- PA -> estimate -->
    <path d="M315 534.8 H326"/><path d="M322.5 532.2 L326.8 534.8 L322.5 537.4"/>
    <!-- estimate -> CEO -->
    <path d="M404 534.8 H415"/><path d="M411.5 532.2 L415.8 534.8 L411.5 537.4"/>
    <!-- CEO -> contruccion -->
    <path d="M494 534.8 H504"/><path d="M500.5 532.2 L504.8 534.8 L500.5 537.4"/>
    <!-- contruccion -> final -->
    <path d="M582.5 534.8 H594"/><path d="M590 532.2 L594.3 534.8 L590 537.4"/>
    <!-- reject lines -->
    <path d="M276 548 V573.4 H594"/><path d="M454.7 548 V573.4"/><path d="M544 548 V573.4"/>
    <path d="M590 570.8 L594.3 573.4 L590 576"/>
  </g>
  <g fill="#ebebeb" stroke="#9c9c9c" stroke-width="1">
    <rect x="148.5" y="522.5" width="77.5" height="25.3"/>
    <rect x="238" y="522.5" width="76.7" height="25.3"/>
    <rect x="327.3" y="522.5" width="76.5" height="25.3" rx="12.6"/>
    <rect x="416.5" y="522.5" width="77.3" height="25.3"/>
    <rect x="505.3" y="522.5" width="77.2" height="25.3"/>
  </g>
  <rect x="594.8" y="522" width="77.2" height="26" fill="#009a00"/>
  <rect x="594.8" y="560.3" width="77.2" height="26.3" rx="13" fill="#ef5340" stroke="#c9473a" stroke-width=".6"/>
  <rect x="149.2" y="561" width="75.8" height="24.6" rx="12.3" fill="#666"/>
  <g font-size="6.3" fill="#555" text-anchor="middle">
    <text x="187.2" y="537.2" textLength="36" lengthAdjust="spacingAndGlyphs">SUBMITTER</text>
    <text x="276.3" y="537.2" textLength="60.5" lengthAdjust="spacingAndGlyphs">PROJECT ACCOUNTANT</text>
    <text x="365.5" y="537.2" textLength="30" lengthAdjust="spacingAndGlyphs">ESTIMATE</text>
    <text x="454.7" y="537.2" textLength="13.5" lengthAdjust="spacingAndGlyphs">CEO</text>
    <text x="544" y="537.2" textLength="48" lengthAdjust="spacingAndGlyphs">CONTRUCCION</text>
  </g>
  <g font-size="6.3" fill="#fff" text-anchor="middle" font-weight="bold">
    <text x="633.4" y="537.2" textLength="51" lengthAdjust="spacingAndGlyphs">FINAL APPROVE</text>
    <text x="633.4" y="575.8" textLength="25" lengthAdjust="spacingAndGlyphs">REJECT</text>
    <text x="187" y="575.6" textLength="35.5" lengthAdjust="spacingAndGlyphs">WITHDRAW</text>
  </g>
  <!-- branch icon -->
  <g fill="none" stroke="#8c8c8c" stroke-width=".9">
    <rect x="364.7" y="552" width="2.4" height="2.4"/>
    <path d="M365.9 554.4 V562 M360.2 562 V558.4 H371.6 V562"/>
    <rect x="359" y="562" width="2.4" height="3.4"/><rect x="364.7" y="562" width="2.4" height="3.4"/><rect x="370.4" y="562" width="2.4" height="3.4"/>
  </g>
</svg>





</body>
</html>
